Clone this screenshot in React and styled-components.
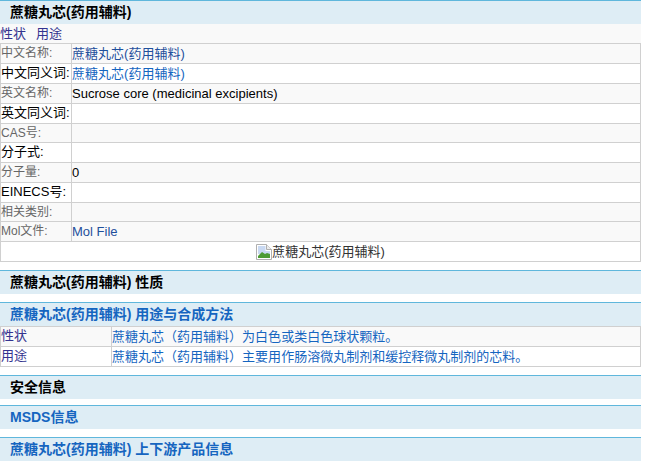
import styled, { createGlobalStyle } from 'styled-components'

const GlobalStyle = createGlobalStyle`
  html, body {
    margin: 0;
    padding: 0;
    background: #fff;
  }
  body {
    font-family: "Liberation Sans", "Noto Sans CJK SC", sans-serif;
    font-size: 13px;
    color: #000;
  }
`

const Page = styled.div`
  width: 641px;
`

const SectionTitle = styled.h2`
  box-sizing: border-box;
  height: 24px;
  margin: ${(p) => p.$top || 0}px 0 0;
  padding-left: 10px;
  border-top: 1px solid #5fb7dc;
  background: #deedf5;
  font-size: 14px;
  font-weight: bold;
  line-height: 22px;
  color: ${(p) => (p.$link ? '#1565c0' : '#000')};
`

const Tabs = styled.div`
  display: flex;
  gap: 10px;
  height: 19px;
  background: #f9f9f9;
  line-height: 19px;
  color: #33338f;
`

const Table = styled.div`
  box-sizing: border-box;
  border: 1px solid #d0d0d0;
  border-bottom: 0;
`

const Row = styled.div`
  box-sizing: border-box;
  display: grid;
  grid-template-columns: ${(p) => p.$label}px 1fr;
  height: ${(p) => p.$height || 20}px;
  border-bottom: 1px solid #d0d0d0;
  background: ${(p) => (p.$shade ? '#f9f9f9' : '#fff')};
`

const Label = styled.div`
  border-right: 1px solid #d0d0d0;
  font-size: ${(p) => (p.$large ? 13 : 12)}px;
  line-height: 18px;
  color: ${(p) => p.$color || (p.$large ? '#000' : '#666')};
  white-space: nowrap;
`

const Value = styled.div`
  line-height: 19px;
  letter-spacing: 0.01px;
  color: ${(p) => p.$color || '#000'};
  white-space: nowrap;
`

const ImageRow = styled.div`
  box-sizing: border-box;
  display: flex;
  justify-content: center;
  align-items: center;
  height: 20px;
  border-bottom: 1px solid #d0d0d0;
  color: #333;
  line-height: 16px;
`

const BrokenImage = () => (
  <svg width="16" height="16" viewBox="0 0 16 16">
    <path d="M.5.5h10l5 5v10H.5z" fill="#fff" stroke="#b0b0b0" />
    <path d="M10.500.5v5h5" fill="#ececec" stroke="#b0b0b0" />
    <path d="M2 2h7.500v5H14v3H2z" fill="#c9d9f2" />
    <path d="M2 14v-2l4-4 3 2 2-1 3 1v4z" fill="#4c9b34" />
  </svg>
)

const basicRows = [
  { label: '中文名称:', value: '蔗糖丸芯(药用辅料)', color: '#1f4f9c', shade: true },
  { label: '中文同义词:', value: '蔗糖丸芯(药用辅料)', color: '#1565c0', large: true },
  { label: '英文名称:', value: 'Sucrose core (medicinal excipients)', shade: true },
  { label: '英文同义词:', large: true },
  { label: 'CAS号:', shade: true, height: 19 },
  { label: '分子式:', large: true },
  { label: '分子量:', value: '0', shade: true },
  { label: 'EINECS号:', large: true },
  { label: '相关类别:', shade: true, height: 19 },
  { label: 'Mol文件:', value: 'Mol File', color: '#1f4f9c', shade: true },
]

const useRows = [
  {
    label: '性状',
    value: '蔗糖丸芯（药用辅料）为白色或类白色球状颗粒。',
    shade: true,
  },
  {
    label: '用途',
    value: '蔗糖丸芯（药用辅料）主要用作肠溶微丸制剂和缓控释微丸制剂的芯料。',
  },
]

export default function App() {
  return (
    <Page>
      <GlobalStyle />
      <SectionTitle>蔗糖丸芯(药用辅料)</SectionTitle>
      <Tabs>
        <span>性状</span>
        <span>用途</span>
      </Tabs>
      <Table>
        {basicRows.map((row) => (
          <Row key={row.label} $label={71} $shade={row.shade} $height={row.height}>
            <Label $large={row.large}>{row.label}</Label>
            <Value $color={row.color}>{row.value}</Value>
          </Row>
        ))}
        <ImageRow>
          <BrokenImage />
          蔗糖丸芯(药用辅料)
        </ImageRow>
      </Table>
      <SectionTitle $top={8}>蔗糖丸芯(药用辅料) 性质</SectionTitle>
      <SectionTitle $top={8} $link>
        蔗糖丸芯(药用辅料) 用途与合成方法
      </SectionTitle>
      <Table>
        {useRows.map((row) => (
          <Row key={row.label} $label={111} $shade={row.shade}>
            <Label $large $color="#33338f">{row.label}</Label>
            <Value $color="#1565c0">{row.value}</Value>
          </Row>
        ))}
      </Table>
      <SectionTitle $top={8}>安全信息</SectionTitle>
      <SectionTitle $top={6} $link>
        MSDS信息
      </SectionTitle>
      <SectionTitle $top={8} $link>
        蔗糖丸芯(药用辅料) 上下游产品信息
      </SectionTitle>
    </Page>
  )
}
